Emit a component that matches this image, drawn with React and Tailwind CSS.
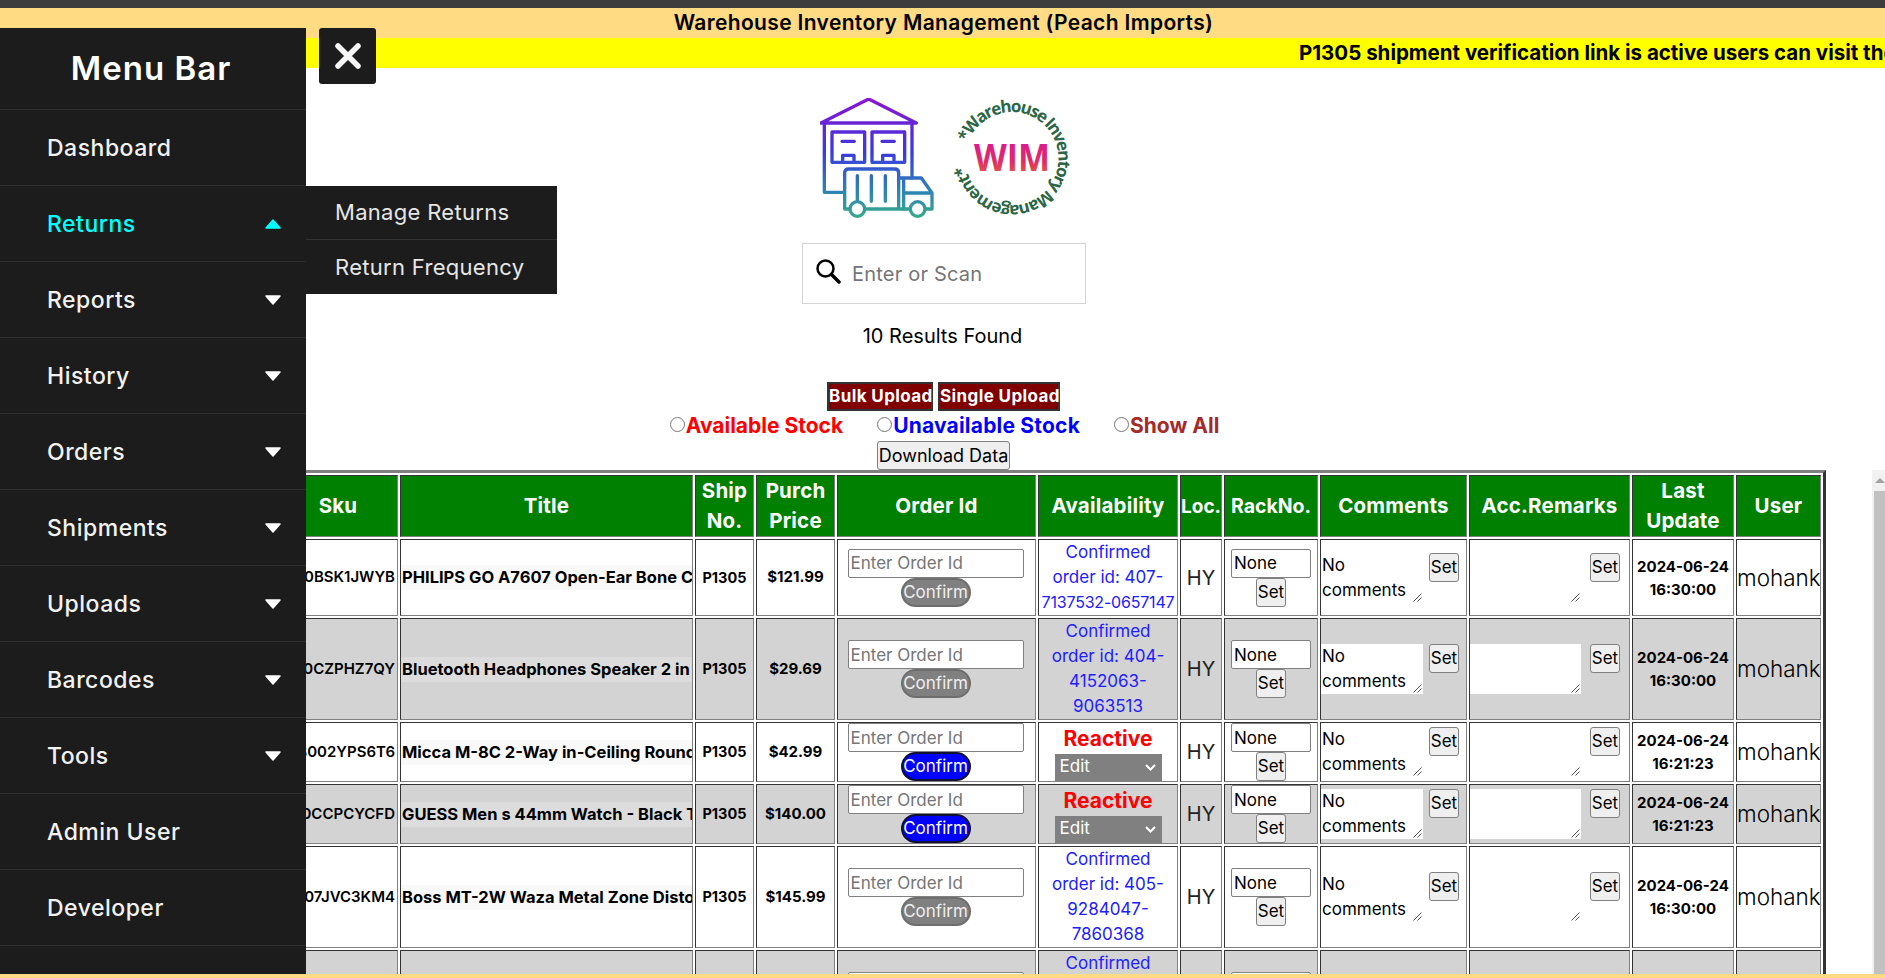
import { useState } from 'react';

const menuItems = [
  { label: 'Dashboard' },
  { label: 'Returns', caret: true, open: true },
  { label: 'Reports', caret: true },
  { label: 'History', caret: true },
  { label: 'Orders', caret: true },
  { label: 'Shipments', caret: true },
  { label: 'Uploads', caret: true },
  { label: 'Barcodes', caret: true },
  { label: 'Tools', caret: true },
  { label: 'Admin User' },
  { label: 'Developer' },
];

const rows = [
  {
    sku: 'B0BSK1JWYB',
    title: 'PHILIPS GO A7607 Open-Ear Bone Conduction Headphones',
    price: '$121.99',
    order: ['407-', '7137532-0657147'],
    date: '16:30:00',
    height: 'h-[77px]',
  },
  {
    sku: 'B0CZPHZ7QY',
    title: 'Bluetooth Headphones Speaker 2 in 1 Wireless',
    price: '$29.69',
    order: ['404-', '4152063-', '9063513'],
    date: '16:30:00',
    height: 'h-[102px]',
  },
  {
    sku: 'B002YPS6T6',
    title: 'Micca M-8C 2-Way in-Ceiling Round Speaker',
    price: '$42.99',
    date: '16:21:23',
    height: 'h-[60px]',
  },
  {
    sku: 'B0CCPCYCFD',
    title: 'GUESS Men s 44mm Watch - Black Tone Dial',
    price: '$140.00',
    date: '16:21:23',
    height: 'h-[60px]',
  },
  {
    sku: 'B07JVC3KM4',
    title: 'Boss MT-2W Waza Metal Zone Distortion Pedal',
    price: '$145.99',
    order: ['405-', '9284047-', '7860368'],
    date: '16:30:00',
    height: 'h-[102px]',
  },
  {
    sku: 'B0BXYZ1234',
    title: 'Sony Wireless Noise Cancelling Headphones',
    price: '$98.00',
    order: ['402-', '1187340-', '5521906'],
    date: '16:30:00',
    height: 'h-[102px]',
  },
];

const cellBorder = 'border border-t-[#333333] border-l-[#333333] border-r-[#808080] border-b-[#808080] p-0';
const headCell = `${cellBorder} bg-[#008000] text-white font-bold text-[20.5px] tracking-[0.2px] leading-[30px] text-center`;
const plainButton = 'bg-[#efefef] border border-[#808080] rounded-[3px] text-[17px] text-black h-[29px] leading-none';

const Caret = ({ up }) => (
  <svg width="16" height="10" viewBox="0 0 16 10" className={up ? 'text-[#00ffff]' : 'text-white'}>
    <polygon
      points={up ? '8,1 15,9 1,9' : '1,1 15,1 8,9'}
      fill="currentColor"
      stroke="currentColor"
      strokeWidth="1.5"
      strokeLinejoin="round"
    />
  </svg>
);

const WarehouseLogo = () => (
  <svg width="114" height="120" viewBox="30 25 340 360" fill="none">
    <defs>
      <linearGradient id="wh" gradientUnits="userSpaceOnUse" x1="0" y1="25" x2="0" y2="385">
        <stop offset="0" stopColor="#8f12d2" />
        <stop offset="0.45" stopColor="#3a3adc" />
        <stop offset="0.75" stopColor="#2d7fb8" />
        <stop offset="1" stopColor="#37aa8a" />
      </linearGradient>
    </defs>
    <g stroke="url(#wh)" strokeWidth="10" strokeLinecap="round" strokeLinejoin="round">
      <path d="M32 100 L175 28 L318 100 Z" />
      <path d="M42 100 V308 H100 M305 100 V265" />
      <rect x="65" y="127" width="98" height="91" />
      <rect x="185" y="127" width="98" height="91" />
      <path d="M95 155 H132 M215 155 H252" />
      <path d="M97 218 V197 H131 V218 M217 218 V197 H251 V218" />
      <path d="M118 358 H103 V250 Q103 238 115 238 H253 Q265 238 265 250 V358 M163 358 H298" />
      <path d="M141 258 V335 M183 258 V335 M225 258 V335" />
      <path d="M265 265 H333 L365 310 V358 H345 M280 265 V358 M280 310 H365" />
      <circle cx="141" cy="358" r="22" />
      <circle cx="322" cy="358" r="22" />
    </g>
  </svg>
);

const WimLogo = () => (
  <svg width="114" height="122" viewBox="0 0 114 122" className="overflow-visible">
    <defs>
      <linearGradient id="wim" x1="0" y1="0" x2="0" y2="1">
        <stop offset="0" stopColor="#d90fa8" />
        <stop offset="0.6" stopColor="#e02c66" />
        <stop offset="1" stopColor="#e2752c" />
      </linearGradient>
      <path id="ring" d="M 13.3 44.6 A 46.5 46.5 0 1 1 10.8 66.2" />
    </defs>
    <text fontFamily="'Open Sans', sans-serif" fontWeight="700" fontSize="17" fill="#2c6644">
      <textPath href="#ring" textLength="268" lengthAdjust="spacing">*Warehouse Inventory Management*</textPath>
    </text>
    <text
      x="57"
      y="73"
      textAnchor="middle"
      fontFamily="'Open Sans', sans-serif"
      fontWeight="700"
      fontSize="37"
      fill="url(#wim)"
      textLength="76"
      lengthAdjust="spacingAndGlyphs"
    >
      WIM
    </text>
  </svg>
);

const Sidebar = () => (
  <aside className="absolute left-0 top-[28px] bottom-[4px] w-[306px] bg-[#1c1c1c] z-20">
    <div className="h-[82px] flex items-center justify-center pr-[4px] border-b border-[#2e2e2e] text-white text-[33px] font-semibold tracking-[1px]">
      Menu Bar
    </div>
    {menuItems.map((item) => (
      <div
        key={item.label}
        className={`h-[76px] flex items-center justify-between pl-[47px] pr-[25px] pt-[1px] border-b border-[#2e2e2e] text-[23px] font-medium tracking-[0.5px] ${item.open ? 'text-[#00ffff]' : 'text-[#f2f2f2]'}`}
      >
        {item.label}
        {item.caret && <Caret up={item.open} />}
      </div>
    ))}
  </aside>
);

const OrderCell = ({ row }) => (
  <div className="flex flex-col items-center pr-[2px]">
    <input
      placeholder="Enter Order Id"
      className="w-[176px] h-[29px] border border-[#808080] rounded-[2px] bg-white px-[2px] text-[17px] placeholder:text-[#757575]"
    />
    <button
      className={`w-[70px] h-[29px] rounded-full text-[17px] leading-none ${row.order ? 'bg-[#808080] border-2 border-[#6e6e6e] text-[#efefef]' : 'bg-[#0000ff] border-2 border-[#111133] text-white'}`}
    >
      Confirm
    </button>
  </div>
);

const AvailabilityCell = ({ row }) => {
  if (row.order) {
    const [first, ...rest] = row.order;
    return (
      <div className="text-[#2020ff] text-[17px] leading-[25px] text-center whitespace-nowrap">
        <div>Confirmed</div>
        <div>order id: {first}</div>
        {rest.map((part) => (
          <div key={part} className={part.length > 8 ? 'text-[16px] tracking-[-0.2px]' : ''}>{part}</div>
        ))}
      </div>
    );
  }
  return (
    <div className="flex flex-col items-center">
      <span className="text-[#ff0000] font-bold text-[21px] leading-[30px]">Reactive</span>
      <div className="relative">
        <select className="block w-[107px] h-[27px] bg-[#808080] text-white text-[17px] pl-[5px] appearance-none">
          <option>Edit</option>
        </select>
        <svg width="11" height="7" viewBox="0 0 11 7" fill="none" stroke="white" strokeWidth="2" className="absolute right-[6px] top-[10px] pointer-events-none">
          <path d="M1 1 L5.5 5.5 L10 1" />
        </svg>
      </div>
    </div>
  );
};

const NoteCell = ({ value, width, gap }) => (
  <div className="flex items-start">
    <div className={`relative ${width} h-[50px]`}>
      <textarea
        defaultValue={value}
        className="block w-full h-full resize-none bg-white pl-[1px] text-[17px] leading-[25px] text-black overflow-hidden outline-none"
      />
      <svg width="9" height="9" viewBox="0 0 9 9" stroke="#555555" strokeWidth="1" className="absolute right-[1px] bottom-[1px] pointer-events-none">
        <path d="M0.5 8.5 L8.5 0.5 M4.5 8.5 L8.5 4.5" />
      </svg>
    </div>
    <button className={`${plainButton} w-[30px] ${gap}`}>Set</button>
  </div>
);

export default function App() {
  const [stock, setStock] = useState('');

  return (
    <div className="relative h-screen flex flex-col overflow-hidden bg-white text-black [font-family:Inter,sans-serif]">
      <div className="h-2 bg-[#3d3d3d] shrink-0" />
      <div className="h-[30px] shrink-0 bg-[#ffdb84] flex items-center justify-center pl-[2px] text-[21px] font-semibold tracking-[0.35px]">
        Warehouse Inventory Management (Peach Imports)
      </div>
      <div className="h-[30px] shrink-0 bg-[#ffff00] flex items-center overflow-hidden pl-[1299px] text-[20.5px] font-bold whitespace-nowrap">
        P1305 shipment verification link is active users can visit the link
      </div>

      <main className="flex-1 min-h-0 overflow-hidden relative">
        <div className="flex justify-center gap-[21px] pl-[4px] pt-[30px] h-[175px]">
          <WarehouseLogo />
          <WimLogo />
        </div>
        <div className="ml-[802px] w-[284px] h-[61px] border border-[#d4d4d4] flex items-center pl-[12px]">
          <svg width="26" height="26" viewBox="0 0 26 26" fill="none" stroke="black" className="mb-[6px]">
            <circle cx="10.5" cy="10.5" r="8" strokeWidth="2.5" />
            <path d="M16.5 16.5 L24 24" strokeWidth="3.5" strokeLinecap="round" />
          </svg>
          <input placeholder="Enter or Scan" className="ml-[11px] w-[230px] text-[20px] tracking-[0.2px] outline-none placeholder:text-[#757575]" />
        </div>
        <div className="h-[78px] pt-[19px] text-center text-[20px] leading-[26px]">10 Results Found</div>
        <div className="flex justify-center gap-[5px] pl-[2px]">
          <button className="w-[106px] h-[29px] bg-[#800000] border-2 border-[#333333] text-white text-[17px] font-bold tracking-[0.4px] whitespace-nowrap leading-none">Bulk Upload</button>
          <button className="w-[122px] h-[29px] bg-[#800000] border-2 border-[#333333] text-white text-[17px] font-bold tracking-[0.4px] whitespace-nowrap leading-none">Single Upload</button>
        </div>
        <div className="flex justify-center items-center gap-[34px] pl-[4px] h-[30px] text-[21px] font-bold">
          <label className="flex items-center text-[#ff0000]">
            <input type="radio" name="stock" checked={stock === 'a'} onChange={() => setStock('a')} className="w-[15px] h-[15px] mb-[4px] mr-[1px]" />
            Available Stock
          </label>
          <label className="flex items-center text-[#0000ff] tracking-[0.2px]">
            <input type="radio" name="stock" checked={stock === 'u'} onChange={() => setStock('u')} className="w-[15px] h-[15px] mb-[4px] mr-[1px]" />
            Unavailable Stock
          </label>
          <label className="flex items-center text-[#a52a2a]">
            <input type="radio" name="stock" checked={stock === 's'} onChange={() => setStock('s')} className="w-[15px] h-[15px] mb-[4px] mr-[1px]" />
            Show All
          </label>
        </div>
        <div className="flex justify-center pl-[2px]">
          <button className="bg-[#efefef] border border-[#808080] rounded-[3px] text-[18px] text-black h-[29px] leading-none w-[133px] whitespace-nowrap">Download Data</button>
        </div>

        <table className="table-fixed w-[1553px] ml-[273px] border-separate border-spacing-[2px] border-[3px] border-t-[#808080] border-l-[#808080] border-r-[#333333] border-b-[#333333]">
          <thead>
            <tr className="h-[62px]">
              <th className={`${headCell} w-[120px]`}>Sku</th>
              <th className={`${headCell} w-[293px]`}>Title</th>
              <th className={`${headCell} w-[59px]`}>Ship No.</th>
              <th className={`${headCell} w-[79px]`}>Purch Price</th>
              <th className={`${headCell} w-[199px]`}>Order Id</th>
              <th className={`${headCell} w-[140px]`}>Availability</th>
              <th className={`${headCell} w-[42px]`}><span className="text-[19px] tracking-normal">Loc.</span></th>
              <th className={`${headCell} w-[94px]`}><span className="text-[19.5px] tracking-normal">RackNo.</span></th>
              <th className={`${headCell} w-[147px]`}>Comments</th>
              <th className={`${headCell} w-[161px]`}>Acc.Remarks</th>
              <th className={`${headCell} w-[102px]`}>Last Update</th>
              <th className={`${headCell} w-[85px]`}>User</th>
            </tr>
          </thead>
          <tbody>
            {rows.map((row, i) => (
              <tr key={row.sku} className={`${row.height} ${i % 2 === 1 ? 'bg-[#d3d3d3]' : 'bg-white'}`}>
                <td className={`${cellBorder} text-right pr-[2px] text-[15px] font-semibold whitespace-nowrap`}>{row.sku}</td>
                <td className={cellBorder}>
                  <div className={`overflow-hidden whitespace-nowrap h-[25px] pl-[1px] text-[16.5px] font-bold leading-[25px] ${i % 2 === 1 ? 'bg-[#dcdcdc]' : 'bg-[#f9f9f9]'}`}>
                    {row.title}
                  </div>
                </td>
                <td className={`${cellBorder} text-center text-[14.5px] font-bold`}>P1305</td>
                <td className={`${cellBorder} text-center text-[15px] font-bold`}>{row.price}</td>
                <td className={cellBorder}><OrderCell row={row} /></td>
                <td className={cellBorder}><AvailabilityCell row={row} /></td>
                <td className={`${cellBorder} text-center text-[20px] text-[#222222]`}>HY</td>
                <td className={cellBorder}>
                  <div className="flex flex-col items-center">
                    <input defaultValue="None" className="w-[80px] h-[29px] border border-[#808080] rounded-[2px] bg-white px-[2px] text-[17px]" />
                    <button className={`${plainButton} w-[30px]`}>Set</button>
                  </div>
                </td>
                <td className={cellBorder}><NoteCell value="No comments" width="w-[102px]" gap="ml-[6px]" /></td>
                <td className={cellBorder}><NoteCell value="" width="w-[111px]" gap="ml-[9px]" /></td>
                <td className={`${cellBorder} text-center text-[15px] font-bold leading-[23px]`}>
                  2024-06-24
                  <br />
                  {row.date}
                </td>
                <td className={`${cellBorder} text-center text-[22.5px] font-light overflow-hidden`}>mohank</td>
              </tr>
            ))}
          </tbody>
        </table>

        <div className="absolute right-0 top-[402px] bottom-0 w-[13px] bg-[#f1f1f1] pl-[2px]">
          <div className="h-[21px] flex items-center justify-center">
            <div className="w-0 h-0 border-x-[5px] border-x-transparent border-b-[5px] border-b-[#a3a3a3]" />
          </div>
          <div className="h-full bg-[#c1c1c1]" />
        </div>
      </main>

      <div className="h-[4px] shrink-0 bg-[#ffdb84] relative z-30" />

      <Sidebar />

      <button className="absolute left-[319px] top-[28px] w-[57px] h-[56px] bg-[#1c1c1c] rounded-[3px] flex items-center justify-center z-20">
        <svg width="26" height="26" viewBox="0 0 26 26" stroke="#f5f5f5" strokeWidth="5.5" strokeLinecap="round">
          <path d="M3 3 L23 23 M23 3 L3 23" />
        </svg>
      </button>

      <div className="absolute left-[306px] top-[186px] w-[251px] h-[108px] bg-[#1c1c1c] z-20 text-[22px] tracking-[0.3px] text-[#e6e6e6]">
        <div className="h-[54px] flex items-center pl-[29px] border-b border-[#333333]">Manage Returns</div>
        <div className="h-[54px] flex items-center pl-[29px]">Return Frequency</div>
      </div>
    </div>
  );
}
